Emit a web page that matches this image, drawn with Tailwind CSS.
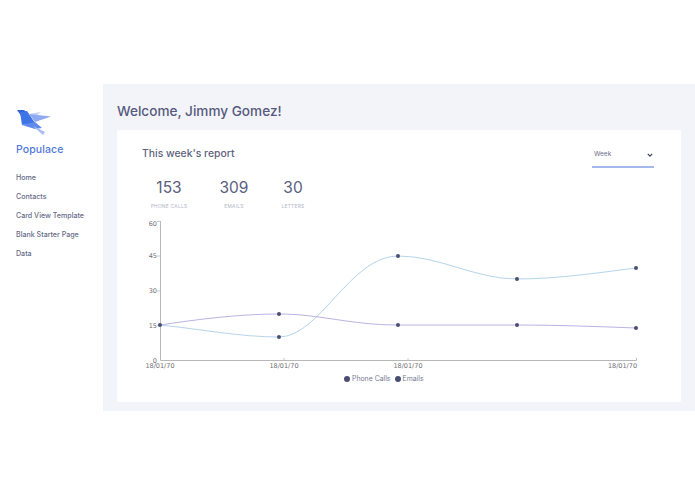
<!DOCTYPE html>
<html lang="en">
  <head>
    <meta charset="UTF-8" />
    <title>Populace</title>
    <script src="https://cdn.jsdelivr.net/npm/@tailwindcss/browser@4"></script>
  </head>
  <body class="bg-white font-['Inter',sans-serif]">
    <div class="flex h-[494px] w-[695px] overflow-hidden pt-[84px]">
      <aside class="w-[103px] shrink-0 pl-4 pt-6">
        <svg class="block h-[28px] w-[36px]" viewBox="16 107 36 28">
          <polygon points="17,109 24,109 29,113 22,116" fill="#2f63dd" />
          <polygon points="20,111 27,110 35,122 22,124" fill="#3f74e6" />
          <polygon points="28,113 41,111 35,116" fill="#c5d2f5" />
          <polygon points="29,113 51,115.5 35,121" fill="#8eaaf0" />
          <polygon points="22,124 35,121 42,127 35,128" fill="#5f8aec" />
          <polygon points="33,125 45,131 43,134 36,128" fill="#a9bff4" />
        </svg>
        <div class="mt-[6px] text-[10.5px] leading-[16px] font-medium tracking-[0.1px] text-[#4f78dc]">Populace</div>
        <nav class="mt-[14px] flex flex-col gap-[6.9px] text-[7.1px] leading-[12px] font-medium text-[#666a86]">
          <a>Home</a>
          <a>Contacts</a>
          <a>Card View Template</a>
          <a>Blank Starter Page</a>
          <a>Data</a>
        </nav>
      </aside>
      <main class="h-[327px] flex-1 bg-[#f3f4fa] px-[14px]">
        <h1 class="pt-[16px] text-[13.6px] leading-[22px] font-medium text-[#565a7c]">Welcome, Jimmy Gomez!</h1>
        <section class="mt-[8px] h-[272px] w-[564px] rounded-[2px] bg-white">
          <div class="flex items-start justify-between pr-[27px] pl-[25px]">
            <h2 class="pt-[16px] text-[10.4px] leading-[16px] font-medium text-[#5f637f]">This week's report</h2>
            <div class="mt-[12px] flex h-[26px] w-[62px] items-center justify-between border-b-2 border-[#a3b9ec] pt-[2px] pr-[1px] pl-[2px]">
              <span class="text-[6.5px] text-[#6a6e88]">Week</span>
              <svg class="h-[6px] w-[6px]" viewBox="0 0 6 6"><path d="M0.8 1.8 L3 4.2 L5.2 1.8" fill="none" stroke="#3c4060" stroke-width="1.2" /></svg>
            </div>
          </div>
          <div class="mt-[10px] flex pl-[33px]">
            <div class="flex w-[38px] flex-col items-center">
              <span class="text-[15.5px] leading-[20px] text-[#5a5e80]">153</span>
              <span class="mt-[4px] text-[4.8px] leading-[8px] tracking-[0.3px] whitespace-nowrap text-[#b0b4c6]">PHONE CALLS</span>
            </div>
            <div class="ml-[32px] flex w-[28px] flex-col items-center">
              <span class="text-[15.5px] leading-[20px] text-[#5a5e80]">309</span>
              <span class="mt-[4px] text-[4.8px] leading-[8px] tracking-[0.3px] text-[#b0b4c6]">EMAILS</span>
            </div>
            <div class="ml-[33px] flex w-[24px] flex-col items-center">
              <span class="text-[15.5px] leading-[20px] text-[#5a5e80]">30</span>
              <span class="mt-[4px] text-[4.8px] leading-[8px] tracking-[0.3px] text-[#b0b4c6]">LETTERS</span>
            </div>
          </div>
          <svg class="mt-[7px] ml-[13px] block h-[154px] w-[534px] font-['DejaVu_Sans',sans-serif]" viewBox="130 217 534 154">
            <g stroke="#b8b8bb" fill="none">
              <path d="M160.5 221 V360.5 H636.5 V358" stroke-width="1" />
              <path d="M157 221.5 H160 M157 256 H160 M157 291 H160 M157 325.5 H160 M284 358 V361 M408 358 V361" stroke-width="0.8" />
            </g>
            <g fill="#707075" font-size="6.5" text-anchor="end">
              <text x="157" y="226.3">60</text>
              <text x="157" y="258.2">45</text>
              <text x="157" y="292.5">30</text>
              <text x="157" y="327.5">15</text>
              <text x="157" y="362.5">0</text>
            </g>
            <g fill="#707075" font-size="6.5" text-anchor="middle">
              <text x="160" y="368">18/01/70</text>
              <text x="284" y="368">18/01/70</text>
              <text x="408" y="368">18/01/70</text>
              <text x="622.5" y="368">18/01/70</text>
            </g>
            <path d="M160 325 C200 329 240 337 279 337 C320 337 350 256 398 256 C440 256 475 279 517 279 C557 279 596 273 636 268" fill="none" stroke="#b5d5ec" stroke-width="1" />
            <path d="M160 325 C200 319 240 314 279 314 C320 314 350 325 398 325 L517 325 C557 325 596 326.5 636 328" fill="none" stroke="#bdb2e2" stroke-width="1" />
            <g fill="#4a4e72">
              <circle cx="160" cy="325" r="2" />
              <circle cx="279" cy="314" r="2" />
              <circle cx="279" cy="337" r="2" />
              <circle cx="398" cy="256" r="2" />
              <circle cx="398" cy="325" r="2" />
              <circle cx="517" cy="279" r="2" />
              <circle cx="517" cy="325" r="2" />
              <circle cx="636" cy="268" r="2" />
              <circle cx="636" cy="328" r="2" />
            </g>
          </svg>
          <div class="mt-[3px] flex items-center pl-[227px] text-[6.9px] leading-[10px] text-[#767a94]">
            <span class="mr-[1px] h-[6px] w-[6px] rounded-full bg-[#4a4e72]"></span>
            <span class="ml-[1px]">Phone Calls</span>
            <span class="mr-[1px] ml-[4px] h-[6px] w-[6px] rounded-full bg-[#4a4e72]"></span>
            <span class="ml-[1px]">Emails</span>
          </div>
        </section>
      </main>
    </div>
  </body>
</html>
